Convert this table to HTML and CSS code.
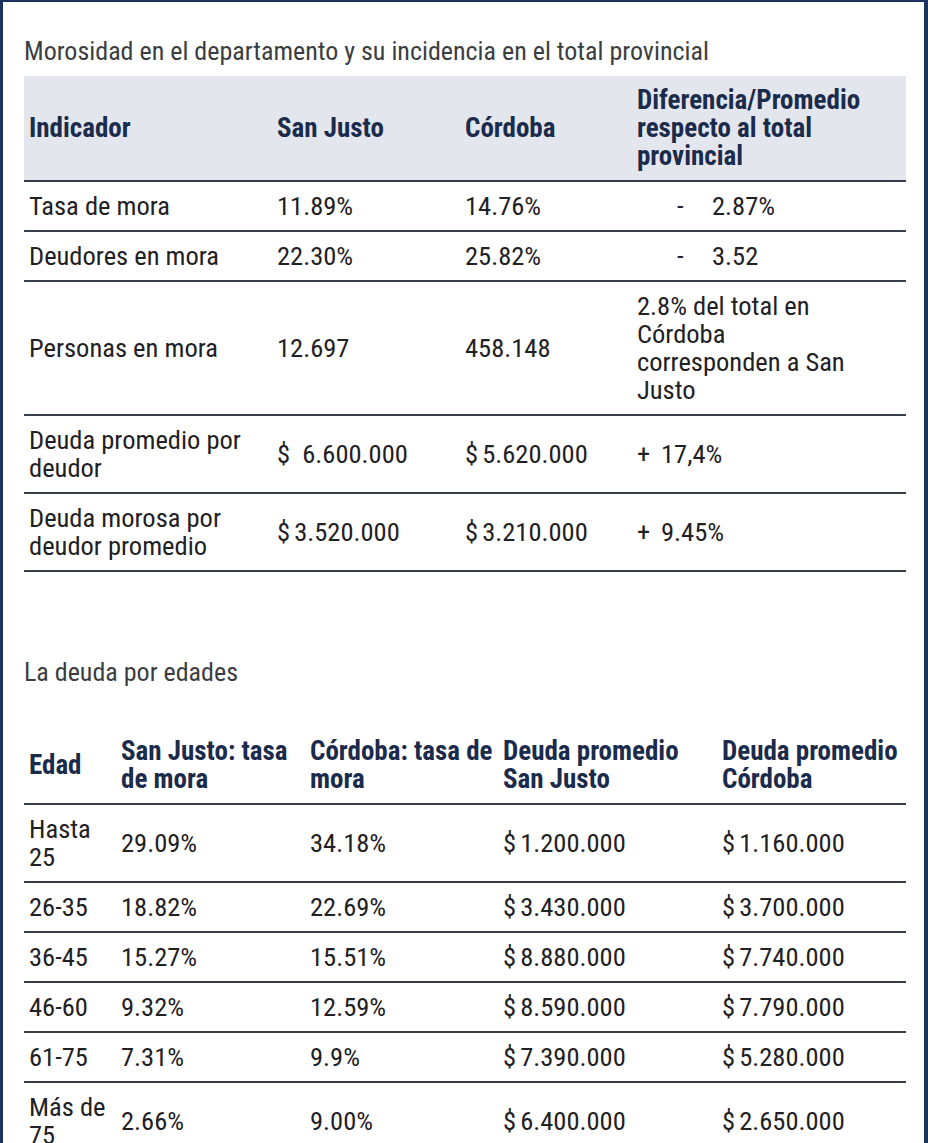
FILE: index.html
```html
<!DOCTYPE html>
<html lang="es">
<head>
<meta charset="utf-8">
<title>Morosidad San Justo</title>
<link rel="stylesheet" href="styles.css">
</head>
<body>
<div class="frame">
  <h2 class="caption">Morosidad en el departamento y su incidencia en el total provincial</h2>
  <table class="tbl tbl-one">
    <colgroup>
      <col class="c1"><col class="c2"><col class="c3"><col class="c4">
    </colgroup>
    <thead>
      <tr>
        <th>Indicador</th>
        <th>San Justo</th>
        <th>Córdoba</th>
        <th>Diferencia/Promedio<br>respecto al total<br>provincial</th>
      </tr>
    </thead>
    <tbody>
      <tr>
        <td>Tasa de mora</td>
        <td>11.89%</td>
        <td>14.76%</td>
        <td><span class="minus">-</span>2.87%</td>
      </tr>
      <tr>
        <td>Deudores en mora</td>
        <td>22.30%</td>
        <td>25.82%</td>
        <td><span class="minus">-</span>3.52</td>
      </tr>
      <tr>
        <td>Personas en mora</td>
        <td>12.697</td>
        <td>458.148</td>
        <td>2.8% del total en<br>Córdoba<br>corresponden a San<br>Justo</td>
      </tr>
      <tr>
        <td>Deuda promedio por<br>deudor</td>
        <td>$&nbsp; 6.600.000</td>
        <td class="money">$ 5.620.000</td>
        <td><span class="plus">+</span>17,4%</td>
      </tr>
      <tr>
        <td>Deuda morosa por<br>deudor promedio</td>
        <td class="money">$ 3.520.000</td>
        <td class="money">$ 3.210.000</td>
        <td><span class="plus">+</span>9.45%</td>
      </tr>
    </tbody>
  </table>

  <h2 class="caption caption-two">La deuda por edades</h2>
  <table class="tbl tbl-two">
    <colgroup>
      <col class="d1"><col class="d2"><col class="d3"><col class="d4"><col class="d5">
    </colgroup>
    <thead>
      <tr>
        <th>Edad</th>
        <th>San Justo: tasa<br>de mora</th>
        <th>Córdoba: tasa de<br>mora</th>
        <th>Deuda promedio<br>San Justo</th>
        <th>Deuda promedio<br>Córdoba</th>
      </tr>
    </thead>
    <tbody>
      <tr>
        <td>Hasta<br>25</td>
        <td>29.09%</td>
        <td>34.18%</td>
        <td class="money">$ 1.200.000</td>
        <td class="money">$ 1.160.000</td>
      </tr>
      <tr>
        <td>26-35</td>
        <td>18.82%</td>
        <td>22.69%</td>
        <td class="money">$ 3.430.000</td>
        <td class="money">$ 3.700.000</td>
      </tr>
      <tr>
        <td>36-45</td>
        <td>15.27%</td>
        <td>15.51%</td>
        <td class="money">$ 8.880.000</td>
        <td class="money">$ 7.740.000</td>
      </tr>
      <tr>
        <td>46-60</td>
        <td>9.32%</td>
        <td>12.59%</td>
        <td class="money">$ 8.590.000</td>
        <td class="money">$ 7.790.000</td>
      </tr>
      <tr>
        <td>61-75</td>
        <td>7.31%</td>
        <td>9.9%</td>
        <td class="money">$ 7.390.000</td>
        <td class="money">$ 5.280.000</td>
      </tr>
      <tr>
        <td>Más de<br>75</td>
        <td>2.66%</td>
        <td>9.00%</td>
        <td class="money">$ 6.400.000</td>
        <td class="money">$ 2.650.000</td>
      </tr>
    </tbody>
  </table>
</div>
</body>
</html>
```

FILE: styles.css
```css
html, body {
  margin: 0;
  padding: 0;
  background: #ffffff;
}

body {
  font-family: "Roboto Condensed", Roboto, "Liberation Sans Narrow", sans-serif;
  font-stretch: 85%;
  color: #1f2124;
  height: 1143px;
  overflow: hidden;
}

.frame {
  box-sizing: border-box;
  min-height: 1143px;
  border-left: 3px solid #1c3360;
  border-right: 4px solid #1c3360;
  border-top: 2px solid #1c3360;
  padding: 35px 18px 0 21px;
  background: #ffffff;
}

.caption {
  margin: 0 0 11px 0;
  font-size: 26px;
  line-height: 28px;
  font-weight: 400;
  color: #3b3d40;
}

.caption-two {
  margin: 86px 0 41px 0;
}

.tbl {
  width: 100%;
  border-collapse: collapse;
  table-layout: fixed;
  font-size: 26.5px;
  line-height: 28px;
}

.tbl th {
  text-align: left;
  vertical-align: middle;
  font-size: 27px;
  font-weight: 700;
  color: #1b2b4b;
  padding: 10px 5px;
  white-space: nowrap;
  border-bottom: 2px solid #383e47;
}

.tbl td {
  text-align: left;
  vertical-align: middle;
  font-weight: 400;
  padding: 10px 5px;
  white-space: nowrap;
  border-bottom: 2px solid #383e47;
}

.tbl-one thead tr {
  background: #e3e6ec;
}

.money {
  word-spacing: -2px;
}

.c1 { width: 248px; }
.c2 { width: 188px; }
.c3 { width: 172px; }
.c4 { width: 274px; }

.d1 { width: 92px; }
.d2 { width: 189px; }
.d3 { width: 193px; }
.d4 { width: 219px; }
.d5 { width: 189px; }

.minus {
  display: inline-block;
  margin-left: 40px;
  width: 35px;
}

.plus {
  display: inline-block;
  width: 24px;
}
```
